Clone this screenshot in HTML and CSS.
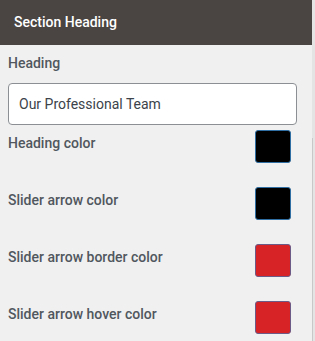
FILE: index.html
```html
<!DOCTYPE html>
<html lang="en">
<head>
    <meta charset="UTF-8">
    <meta name="viewport" content="width=device-width, initial-scale=1.0">
    <title>Section Heading</title>
    <link rel="stylesheet" href="styles.css">
</head>
<body>
    <div class="panel">
        <div class="panel-main">
            <div class="panel-title">Section Heading</div>
            <div class="panel-body">
                <label class="field-label" for="heading">Heading</label>
                <input class="text-input" type="text" id="heading" value="Our Professional Team">

                <div class="color-row">
                    <span class="color-label">Heading color</span>
                    <span class="swatch swatch-black"></span>
                </div>
                <div class="color-row">
                    <span class="color-label">Slider arrow color</span>
                    <span class="swatch swatch-black"></span>
                </div>
                <div class="color-row">
                    <span class="color-label">Slider arrow border color</span>
                    <span class="swatch swatch-red"></span>
                </div>
                <div class="color-row">
                    <span class="color-label">Slider arrow hover color</span>
                    <span class="swatch swatch-red"></span>
                </div>
            </div>
        </div>
        <div class="scroll-track"><div class="scroll-thumb"></div></div>
    </div>
</body>
</html>
```

FILE: styles.css
```css
body {
    margin: 0;
    font-family: Roboto, "Liberation Sans", sans-serif;
    background-color: #f0f0f0;
    overflow: hidden;
}
.panel {
    display: flex;
    height: 341px;
}
.panel-main {
    flex: 1;
}
.panel-title {
    background-color: #4a4542;
    color: #fff;
    font-size: 14px;
    font-weight: 500;
    height: 45px;
    line-height: 45px;
    padding-left: 14px;
}
.panel-body {
    padding: 8px 15px 0 8px;
}
.field-label {
    display: block;
    color: #50575e;
    font-size: 14px;
    font-weight: 500;
    line-height: 20px;
    margin-bottom: 10px;
}
.text-input {
    display: block;
    box-sizing: border-box;
    width: 100%;
    height: 42px;
    padding: 0 10px;
    border: 1px solid #8c8f94;
    border-radius: 4px;
    background: #fff;
    font-family: inherit;
    font-size: 14px;
    color: #3c434a;
    margin-bottom: 5px;
}
.color-row {
    display: flex;
    justify-content: space-between;
    align-items: flex-start;
    height: 57px;
}
.color-label {
    color: #50575e;
    font-size: 14px;
    font-weight: 500;
    line-height: 20px;
    padding-top: 3px;
}
.swatch {
    box-sizing: border-box;
    width: 36px;
    height: 33px;
    border-radius: 3px;
    margin-right: 6px;
}
.swatch-black {
    background-color: #000;
    border: 1px solid #2f6fa3;
}
.swatch-red {
    background-color: #d72226;
    border: 1px solid #6c5a87;
}
.scroll-track {
    width: 3px;
    background-color: #e4e4e4;
    padding-top: 138px;
}
.scroll-thumb {
    width: 1px;
    height: 203px;
    background-color: #c8c8c8;
}
```
